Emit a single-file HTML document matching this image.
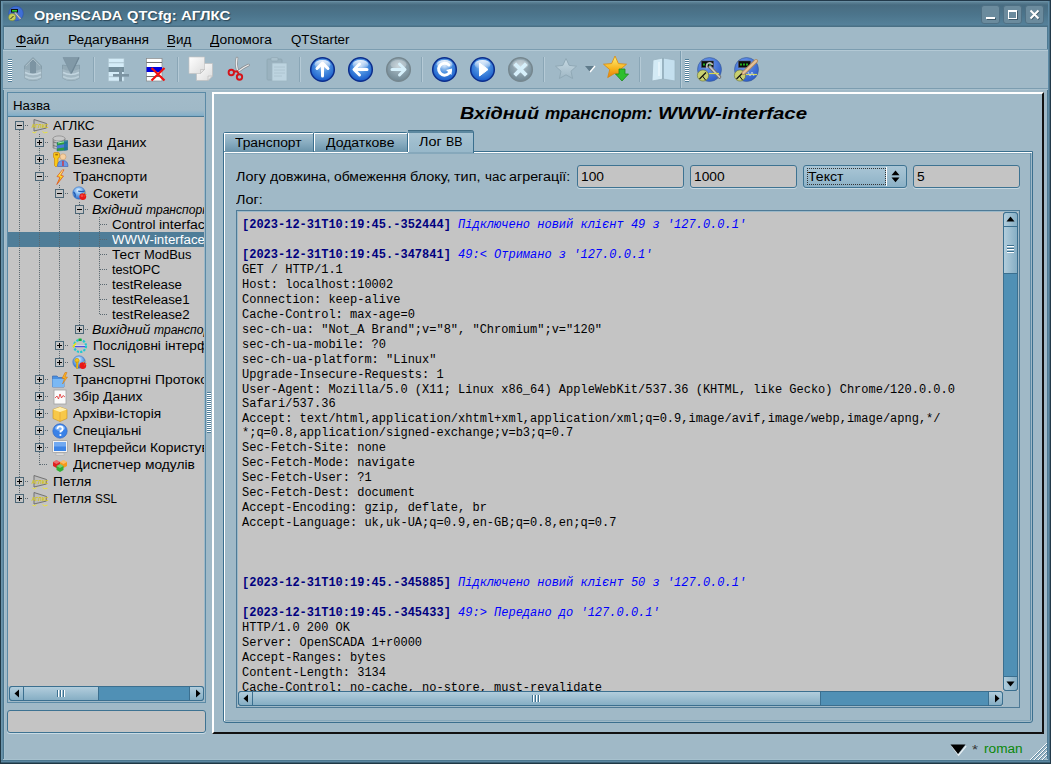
<!DOCTYPE html><html><head><meta charset="utf-8"><style>
html,body{margin:0;padding:0}
body{width:1051px;height:764px;overflow:hidden;position:relative;background:#a0b9c7;font-family:"Liberation Sans",sans-serif}
.a{position:absolute;box-sizing:border-box}
.t{position:absolute;white-space:pre;line-height:20px;transform-origin:0 0;font-family:"Liberation Sans",sans-serif}
.m{position:absolute;white-space:pre;line-height:20px;font-family:"Liberation Mono",monospace;font-size:12px;color:#000}
.m b{color:#00007f}
.m i{color:#0000ff}
svg{position:absolute;overflow:visible}
</style></head><body>

<div class="a" style="left:0px;top:0px;width:1051px;height:764px;background:#203844"></div>
<div class="a" style="left:3px;top:27px;width:1045px;height:733px;background:#a0b9c7"></div>
<div class="a" style="left:0px;top:0px;width:1051px;height:27px;background:linear-gradient(#22394a 0px,#22394a 1px,#7399ae 1px,#5e8397 2px,#486c81 5px,#4c758c 15px,#55819a 25px,#4a7085 26px,#4a7085 27px)"></div>
<div class="a" style="left:0px;top:0px;width:1px;height:764px;background:#203844"></div>
<div class="a" style="left:1px;top:1px;width:2px;height:762px;background:linear-gradient(90deg,#6f98ae,#5d88a1)"></div>
<div class="a" style="left:3px;top:27px;width:1px;height:733px;background:#4c778f"></div>
<div class="a" style="left:4px;top:27px;width:1px;height:733px;background:#a7c1ce"></div>
<div class="a" style="left:1047px;top:27px;width:1px;height:733px;background:#4e7a92"></div>
<div class="a" style="left:1048px;top:1px;width:1px;height:762px;background:#5d8aa5"></div>
<div class="a" style="left:1049px;top:1px;width:1px;height:762px;background:#4a6f84"></div>
<div class="a" style="left:1050px;top:0px;width:1px;height:764px;background:#22394a"></div>
<div class="a" style="left:3px;top:759px;width:1045px;height:1px;background:#a7c1ce"></div>
<div class="a" style="left:1px;top:760px;width:1049px;height:1px;background:#4c778f"></div>
<div class="a" style="left:1px;top:761px;width:1049px;height:1px;background:#5a86a0"></div>
<div class="a" style="left:1px;top:762px;width:1049px;height:1px;background:#3c6074"></div>
<div class="a" style="left:0px;top:763px;width:1051px;height:1px;background:#203844"></div>
<svg style="left:8px;top:6px" width="16" height="16" viewBox="0 0 16 16">
<circle cx="8" cy="7.5" r="7.3" fill="#3f6fd6"/><circle cx="8" cy="7.5" r="7.3" fill="none" stroke="#2a4fa8" stroke-width="0.6"/>
<rect x="3" y="3" width="7" height="3.5" fill="#111"/><rect x="4" y="4" width="5" height="1.6" fill="#2bd02b"/>
<circle cx="4.2" cy="11.2" r="3.6" fill="#c8cf5a" stroke="#6f7a2a" stroke-width="0.5"/><path d="M2.5 13 L5.5 10" stroke="#222" stroke-width="1"/>
<path d="M7 6.5 L12.5 13" stroke="#8c8c8c" stroke-width="2.2"/><path d="M7 6.5 L12.5 13" stroke="#d0d0d0" stroke-width="1"/>
</svg>
<div class="t " style="left:34.00px;top:6px;font-size:13px;font-weight:bold;font-style:normal;color:#fff;transform:scaleX(1.1107);text-shadow:1px 1px 1px #2b4656">OpenSCADA</div>
<div class="t " style="left:126.78px;top:6px;font-size:13px;font-weight:bold;font-style:normal;color:#fff;transform:scaleX(1.1274);text-shadow:1px 1px 1px #2b4656">QTCfg:</div>
<div class="t " style="left:181.00px;top:6px;font-size:13px;font-weight:bold;font-style:normal;color:#fff;transform:scaleX(1.1544);text-shadow:1px 1px 1px #2b4656">АГЛКС</div>
<div class="a" style="left:981px;top:5px;width:19px;height:19px;background:#6b8b9d;border:1px solid #4f7084;border-radius:3px"></div>
<div class="a" style="left:1003px;top:5px;width:19px;height:19px;background:#6b8b9d;border:1px solid #4f7084;border-radius:3px"></div>
<div class="a" style="left:1025px;top:5px;width:19px;height:19px;background:#6b8b9d;border:1px solid #4f7084;border-radius:3px"></div>
<div class="a" style="left:986px;top:17px;width:9px;height:2px;background:#fff;box-shadow:1px 1px 0 #3e5a6a"></div>
<div class="a" style="left:1008px;top:10px;width:9px;height:9px;border:1px solid #fff;border-top-width:2px;box-shadow:1px 1px 0 #3e5a6a"></div>
<svg style="left:1029px;top:9px" width="11" height="11" viewBox="0 0 11 11"><path d="M1.5 1.5 L9.5 9.5 M9.5 1.5 L1.5 9.5" stroke="#3e5a6a" stroke-width="2" transform="translate(0.7,0.7)"/><path d="M1.5 1.5 L9.5 9.5 M9.5 1.5 L1.5 9.5" stroke="#fff" stroke-width="2"/></svg>
<div class="a" style="left:3px;top:49px;width:1045px;height:1px;background:#7c9db0"></div>
<div class="a" style="left:3px;top:50px;width:1045px;height:1px;background:#b3c9d5"></div>
<div class="t " style="left:16.00px;top:30px;font-size:12px;font-weight:normal;font-style:normal;color:#000;transform:scaleX(1.1239);">Файл</div>
<div class="a" style="left:16px;top:46px;width:10px;height:1px;background:#000"></div>
<div class="t " style="left:68.00px;top:30px;font-size:12px;font-weight:normal;font-style:normal;color:#000;transform:scaleX(1.1483);">Редагування</div>
<div class="t " style="left:167.00px;top:30px;font-size:12px;font-weight:normal;font-style:normal;color:#000;transform:scaleX(1.1210);">Вид</div>
<div class="a" style="left:167px;top:46px;width:8px;height:1px;background:#000"></div>
<div class="t " style="left:210.00px;top:30px;font-size:12px;font-weight:normal;font-style:normal;color:#000;transform:scaleX(1.1516);">Допомога</div>
<div class="a" style="left:210px;top:46px;width:9px;height:1px;background:#000"></div>
<div class="t " style="left:291.00px;top:30px;font-size:12px;font-weight:normal;font-style:normal;color:#000;transform:scaleX(1.1098);">QTStarter</div>
<div class="a" style="left:3px;top:51px;width:1045px;height:37px;background:#a0b9c7"></div>
<div class="a" style="left:3px;top:88px;width:1045px;height:1px;background:#7c9db0"></div>
<div class="a" style="left:3px;top:89px;width:1045px;height:1px;background:#a9c1ce"></div>
<div class="a" style="left:8px;top:59px;width:4px;height:23px;background:repeating-linear-gradient(#4f7d98 0px,#4f7d98 1px,#ffffff 1px,#ffffff 2px)"></div>
<div class="a" style="left:685px;top:59px;width:4px;height:23px;background:repeating-linear-gradient(#4f7d98 0px,#4f7d98 1px,#ffffff 1px,#ffffff 2px)"></div>
<div class="a" style="left:93px;top:57px;width:1px;height:25px;background:#8aa6b6"></div>
<div class="a" style="left:94px;top:57px;width:1px;height:25px;background:#b5cad6"></div>
<div class="a" style="left:177px;top:57px;width:1px;height:25px;background:#8aa6b6"></div>
<div class="a" style="left:178px;top:57px;width:1px;height:25px;background:#b5cad6"></div>
<div class="a" style="left:299px;top:57px;width:1px;height:25px;background:#8aa6b6"></div>
<div class="a" style="left:300px;top:57px;width:1px;height:25px;background:#b5cad6"></div>
<div class="a" style="left:421px;top:57px;width:1px;height:25px;background:#8aa6b6"></div>
<div class="a" style="left:422px;top:57px;width:1px;height:25px;background:#b5cad6"></div>
<div class="a" style="left:543px;top:57px;width:1px;height:25px;background:#8aa6b6"></div>
<div class="a" style="left:544px;top:57px;width:1px;height:25px;background:#b5cad6"></div>
<div class="a" style="left:639px;top:57px;width:1px;height:25px;background:#8aa6b6"></div>
<div class="a" style="left:640px;top:57px;width:1px;height:25px;background:#b5cad6"></div>
<div class="a" style="left:680px;top:51px;width:1px;height:37px;background:#7c9db0"></div>
<div class="a" style="left:681px;top:51px;width:1px;height:37px;background:#b5cad6"></div>
<svg width="0" height="0" style="position:absolute"><defs>
<radialGradient id="gb" cx="50%" cy="35%" r="65%"><stop offset="0" stop-color="#bcd8f6"/><stop offset="0.45" stop-color="#4a8fe0"/><stop offset="1" stop-color="#1558c8"/></radialGradient>
<linearGradient id="gbh" x1="0" y1="0" x2="0" y2="1"><stop offset="0" stop-color="#ffffff" stop-opacity="0.9"/><stop offset="1" stop-color="#ffffff" stop-opacity="0"/></linearGradient>
<radialGradient id="gg" cx="50%" cy="35%" r="65%"><stop offset="0" stop-color="#b8c8d0"/><stop offset="0.5" stop-color="#8ea3ae"/><stop offset="1" stop-color="#6f8793"/></radialGradient>
<linearGradient id="gdb" x1="0" y1="0" x2="1" y2="0"><stop offset="0" stop-color="#8aa0ac"/><stop offset="0.5" stop-color="#b9c9d1"/><stop offset="1" stop-color="#7d95a2"/></linearGradient>
<linearGradient id="gstar" x1="0" y1="0" x2="0" y2="1"><stop offset="0" stop-color="#fff27a"/><stop offset="0.6" stop-color="#f7b21c"/><stop offset="1" stop-color="#e87a0c"/></linearGradient>
<linearGradient id="gsb" x1="0" y1="0" x2="0" y2="1"><stop offset="0" stop-color="#a9c3d1"/><stop offset="1" stop-color="#7fa3b8"/></linearGradient>
</defs></svg>
<svg style="left:309px;top:56px" width="27" height="27" viewBox="0 0 27 27"><g transform="translate(0.5,0.5)"><circle cx="13" cy="13" r="11.8" fill="url(#gb)" stroke="#0c2e8c" stroke-width="1.5"/>
<ellipse cx="13" cy="8" rx="8" ry="4.6" fill="url(#gbh)"/><path d="M13 19.5 V7 M7.5 12 L13 6.5 L18.5 12" stroke="#fff" stroke-width="3" fill="none" stroke-linecap="round" stroke-linejoin="round"/></g></svg>
<svg style="left:347px;top:56px" width="27" height="27" viewBox="0 0 27 27"><g transform="translate(0.5,0.5)"><circle cx="13" cy="13" r="11.8" fill="url(#gb)" stroke="#0c2e8c" stroke-width="1.5"/>
<ellipse cx="13" cy="8" rx="8" ry="4.6" fill="url(#gbh)"/><path d="M19.5 13 H7 M12 7.5 L6.5 13 L12 18.5" stroke="#fff" stroke-width="3" fill="none" stroke-linecap="round" stroke-linejoin="round"/></g></svg>
<svg style="left:385px;top:56px" width="27" height="27" viewBox="0 0 27 27"><g transform="translate(0.5,0.5)"><circle cx="13" cy="13" r="11.8" fill="url(#gg)" stroke="#76878f" stroke-width="1.5"/>
<ellipse cx="13" cy="8" rx="8" ry="4.6" fill="#ffffff" fill-opacity="0.25"/><path d="M6.5 13 H19 M14 7.5 L19.5 13 L14 18.5" stroke="#d6f0fb" stroke-width="3" fill="none" stroke-linecap="round" stroke-linejoin="round"/></g></svg>
<svg style="left:431px;top:56px" width="27" height="27" viewBox="0 0 27 27"><g transform="translate(0.5,0.5)"><circle cx="13" cy="13" r="11.8" fill="url(#gb)" stroke="#0c2e8c" stroke-width="1.5"/>
<ellipse cx="13" cy="8" rx="8" ry="4.6" fill="url(#gbh)"/><path d="M17.5 8.5 A6 6 0 1 0 19 14" stroke="#fff" stroke-width="3" fill="none" stroke-linecap="round" stroke-linejoin="round"/><path d="M14.5 13.5 L20.5 12 L20 18.5 Z" fill="#fff"/></g></svg>
<svg style="left:469px;top:56px" width="27" height="27" viewBox="0 0 27 27"><g transform="translate(0.5,0.5)"><circle cx="13" cy="13" r="11.8" fill="url(#gb)" stroke="#0c2e8c" stroke-width="1.5"/>
<ellipse cx="13" cy="8" rx="8" ry="4.6" fill="url(#gbh)"/><path d="M10 6.5 L18.5 13 L10 19.5 Z" fill="#fff" stroke="#fff" stroke-width="1" stroke-linejoin="round"/></g></svg>
<svg style="left:507px;top:56px" width="27" height="27" viewBox="0 0 27 27"><g transform="translate(0.5,0.5)"><circle cx="13" cy="13" r="11.8" fill="url(#gg)" stroke="#76878f" stroke-width="1.5"/>
<ellipse cx="13" cy="8" rx="8" ry="4.6" fill="#ffffff" fill-opacity="0.25"/><path d="M7.2 7.2 L18.8 18.8 M18.8 7.2 L7.2 18.8" stroke="#d6f0fb" stroke-width="4"/></g></svg>
<svg style="left:24px;top:57px" width="18" height="25" viewBox="0 0 18 25"><path d="M0.5 9 L9 0.5 L17.5 9 V21 Q9 26 0.5 21 Z" fill="#93aab6" stroke="#8299a6" stroke-width="0.8"/>
<path d="M0.5 12 Q9 16 17.5 12 V21 Q9 26 0.5 21 Z" fill="#a3b8c3"/>
<path d="M6 5 L9 2 L12 5 V16 Q9 17 6 16 Z" fill="#7c94a2"/>
<path d="M1 15.5 Q9 19.5 17 15.5" stroke="#c3d6e0" stroke-width="1.6" fill="none"/>
<path d="M1 19.5 Q9 23.5 17 19.5" stroke="#bcd0da" stroke-width="1.4" fill="none"/>
<path d="M2 9 L9 2 L16 9" stroke="#a9bcc6" stroke-width="1" fill="none"/></svg>
<svg style="left:62px;top:57px" width="18" height="25" viewBox="0 0 18 25"><path d="M0.5 8 Q9 11 17.5 8 V21 Q9 26 0.5 21 Z" fill="#93aab6" stroke="#8299a6" stroke-width="0.8"/>
<path d="M0.5 12 Q9 16 17.5 12 V21 Q9 26 0.5 21 Z" fill="#a3b8c3"/>
<path d="M1 0.5 H17 L9 17 Z" fill="#8199a7" stroke="#7890a0" stroke-width="0.6"/>
<path d="M17 0.5 L9 17" stroke="#6f8796" stroke-width="1.2"/>
<path d="M1 15.5 Q9 19.5 17 15.5" stroke="#c3d6e0" stroke-width="1.6" fill="none"/>
<path d="M1 19.5 Q9 23.5 17 19.5" stroke="#bcd0da" stroke-width="1.4" fill="none"/></svg>
<svg style="left:107px;top:57px" width="24" height="25" viewBox="0 0 24 25"><rect x="1.5" y="1.5" width="15.5" height="22.5" fill="#d4ecf8" stroke="#b0c6d2" stroke-width="0.6"/>
<rect x="1.5" y="5.3" width="15.5" height="0.9" fill="#a8c0cc"/><rect x="1.5" y="10" width="15.5" height="5" fill="#75909e"/>
<rect x="1.5" y="19.3" width="15.5" height="0.9" fill="#a8c0cc"/>
<rect x="6" y="17" width="16" height="2.6" fill="#7c94a2"/><rect x="12" y="11" width="3" height="13.5" fill="#7c94a2"/></svg>
<svg style="left:145px;top:57px" width="24" height="25" viewBox="0 0 24 25"><rect x="1.5" y="1.5" width="15.5" height="22.5" fill="#fff" stroke="#8a8a8a" stroke-width="0.7"/>
<rect x="1.5" y="5" width="15.5" height="0.9" fill="#606060"/><rect x="1.5" y="10" width="15.5" height="5" fill="#0000e0"/>
<rect x="1.5" y="19" width="15.5" height="0.9" fill="#606060"/>
<path d="M6.5 11 L19.5 23.5 M19.5 11 L6.5 23.5" stroke="#f01010" stroke-width="2.2"/></svg>
<svg style="left:188px;top:56px" width="26" height="26" viewBox="0 0 26 26"><defs><linearGradient id="gpg" x1="0" y1="0" x2="1" y2="1"><stop offset="0" stop-color="#ffffff"/><stop offset="1" stop-color="#dcdcdc"/></linearGradient></defs>
<path d="M8.5 7.5 H24.5 V20 L20 24.5 H8.5 Z" fill="url(#gpg)" stroke="#c0c0c0" stroke-width="0.7"/>
<path d="M24.5 20 L20 20 L20 24.5 Z" fill="#e8e8e8" stroke="#b8b8b8" stroke-width="0.6"/>
<path d="M1 1 H16.5 V13.5 L12.5 17.5 H1 Z" fill="url(#gpg)" stroke="#c4c4c4" stroke-width="0.7"/>
<path d="M16.5 13.5 L12.5 13.5 L12.5 17.5 Z" fill="#e6e6e6" stroke="#b8b8b8" stroke-width="0.6"/></svg>
<svg style="left:226px;top:56px" width="26" height="26" viewBox="0 0 26 26"><path d="M11 2 Q9.5 8 11.5 14.5" stroke="#8a8e92" stroke-width="2.6" fill="none" stroke-linecap="round"/>
<path d="M11 2 Q9.5 8 11.5 14.5" stroke="#eeeeee" stroke-width="1.2" fill="none" stroke-linecap="round"/>
<path d="M22.5 9 Q17 11.5 12 15.5" stroke="#8a8e92" stroke-width="2.6" fill="none" stroke-linecap="round"/>
<path d="M22.5 9 Q17 11.5 12 15.5" stroke="#eeeeee" stroke-width="1.2" fill="none" stroke-linecap="round"/>
<circle cx="5.3" cy="16.5" r="2.7" fill="none" stroke="#d4141a" stroke-width="1.9"/>
<circle cx="13.5" cy="21" r="2.7" fill="none" stroke="#d4141a" stroke-width="1.9"/>
<path d="M7.8 15.5 L11.5 15.5 L12.8 18.5" stroke="#d4141a" stroke-width="1.8" fill="none"/></svg>
<svg style="left:266px;top:57px" width="22" height="25" viewBox="0 0 22 25"><rect x="1" y="2" width="15" height="21" rx="1" fill="#9ab2bf" stroke="#8ea6b3" stroke-width="0.8"/>
<rect x="5" y="0.5" width="7" height="3.5" rx="1" fill="#a9c0cc" stroke="#8ea6b3" stroke-width="0.6"/>
<rect x="6" y="6" width="15" height="18" fill="#bdd4e0" stroke="#9fb6c2" stroke-width="0.8"/>
<path d="M8 10 H19 M8 13 H19 M8 16 H19 M8 19 H16" stroke="#abc2ce" stroke-width="0.8"/></svg>
<svg style="left:554px;top:57px" width="24" height="23" viewBox="0 0 24 23"><defs><linearGradient id="gsg" x1="0" y1="0" x2="0" y2="1"><stop offset="0" stop-color="#c6d9e3"/><stop offset="1" stop-color="#9fb7c4"/></linearGradient></defs><path d="M12 1.5 L15.2 8.4 L22.5 9.2 L17 14.2 L18.6 21.5 L12 17.8 L5.4 21.5 L7 14.2 L1.5 9.2 L8.8 8.4 Z" fill="url(#gsg)" stroke="#90a9b6" stroke-width="1" stroke-linejoin="round"/></svg>
<svg style="left:584px;top:65px" width="12" height="8" viewBox="0 0 12 8"><path d="M1 1 H11 L6 7 Z" fill="#5f7b8b"/><path d="M6 7 L11 1" stroke="#fff" stroke-width="1.4"/></svg>
<svg style="left:603px;top:55px" width="28" height="28" viewBox="0 0 28 28"><path d="M12 1 L15.4 8.6 L23.5 9.2 L17.3 14.6 L19.3 22.6 L12 18.2 L4.7 22.6 L6.7 14.6 L0.5 9.2 L8.6 8.6 Z" fill="url(#gstar)" stroke="#d9880a" stroke-width="0.8"/>
<path d="M16 14 H22 V19 H25.5 L19 26 L12.5 19 H16 Z" fill="#2fbf2f" stroke="#1d8a1d" stroke-width="0.8"/></svg>
<svg style="left:650px;top:56px" width="28" height="27" viewBox="0 0 28 27"><path d="M3 4 L13 2 L13 23 L2 25 Z" fill="#d3eaf5" stroke="#9ab4c2" stroke-width="0.8"/>
<path d="M13 2 L25 4 L25 25 L13 23 Z" fill="#c4dfee" stroke="#9ab4c2" stroke-width="0.8"/>
<path d="M13 2 V23" stroke="#8aa4b2" stroke-width="1.2"/><path d="M9 6 V20" stroke="#eaf6fb" stroke-width="1.5"/></svg>
<svg style="left:697px;top:56px" width="26" height="26" viewBox="0 0 26 26"><defs><radialGradient id="gos" cx="40%" cy="30%" r="70%"><stop offset="0" stop-color="#6f9cf0"/><stop offset="1" stop-color="#2f5fc8"/></radialGradient></defs>
<circle cx="12.5" cy="13.5" r="12" fill="url(#gos)" stroke="#3a5a90" stroke-width="0.6"/>
<rect x="4.5" y="5" width="12" height="6.5" fill="#0c0c0c" stroke="#505050" stroke-width="0.5"/><path d="M6 8.5 H15" stroke="#1fa81f" stroke-width="2" stroke-dasharray="2 1"/>
<circle cx="6" cy="19.5" r="5.6" fill="#c8d070" stroke="#6a7030" stroke-width="0.6"/><path d="M2.5 23 L9 16.5" stroke="#111" stroke-width="1.3"/><path d="M5.5 20 L8.5 24" stroke="#111" stroke-width="1"/><path d="M13 11 L22.5 21" stroke="#707070" stroke-width="3.6" stroke-linecap="round"/><path d="M13 11 L22.5 21" stroke="#c8c8c8" stroke-width="1.8" stroke-linecap="round"/>
<path d="M10.5 12 A3 3 0 1 1 15.5 9" stroke="#b8b8b8" stroke-width="1.8" fill="none"/>
<path d="M12 17.5 H22" stroke="#d8d850" stroke-width="1.2"/></svg>
<svg style="left:734px;top:56px" width="26" height="26" viewBox="0 0 26 26"><defs><radialGradient id="gos" cx="40%" cy="30%" r="70%"><stop offset="0" stop-color="#6f9cf0"/><stop offset="1" stop-color="#2f5fc8"/></radialGradient></defs>
<circle cx="12.5" cy="13.5" r="12" fill="url(#gos)" stroke="#3a5a90" stroke-width="0.6"/>
<rect x="4.5" y="5" width="12" height="6.5" fill="#0c0c0c" stroke="#505050" stroke-width="0.5"/><path d="M6 8.5 H15" stroke="#1fa81f" stroke-width="2" stroke-dasharray="2 1"/>
<circle cx="6" cy="19.5" r="5.6" fill="#c8d070" stroke="#6a7030" stroke-width="0.6"/><path d="M2.5 23 L9 16.5" stroke="#111" stroke-width="1.3"/><path d="M5.5 20 L8.5 24" stroke="#111" stroke-width="1"/><path d="M9.5 17 L22 5" stroke="#b08a60" stroke-width="4" stroke-linecap="round"/><path d="M9.5 17 L22 5" stroke="#e4c29a" stroke-width="2.2" stroke-linecap="round"/>
<path d="M12 18.5 H23" stroke="#d8d850" stroke-width="1.2"/><path d="M14 16 L16 20 L18 16 L20 20" stroke="#c8d8e8" stroke-width="0.8" fill="none"/></svg>
<div class="a" style="left:7px;top:92px;width:199px;height:611px;border:1px solid #5b8aa6;background:#a0b9c7"></div>
<div class="a" style="left:8px;top:93px;width:197px;height:23px;background:linear-gradient(#a3bbc9 0px,#a0b9c7 17px,#86b0c9 22px,#7aa9c6 23px)"></div>
<div class="a" style="left:8px;top:116px;width:197px;height:1px;background:#4b7a95"></div>
<div class="t " style="left:13.00px;top:96px;font-size:12px;font-weight:normal;font-style:normal;color:#000;transform:scaleX(1.1069);">Назва</div>
<div class="a" style="left:8px;top:117px;width:196px;height:569px;background:#c4c4c4"></div>
<div class="a" style="left:8px;top:232px;width:196px;height:15px;background:#4f7d98"></div>
<div class="a" style="left:19px;top:130px;width:1px;height:364px;background:repeating-linear-gradient(#5a6870 0px,#5a6870 1px,transparent 1px,transparent 2px)"></div>
<div class="a" style="left:39px;top:134px;width:1px;height:331px;background:repeating-linear-gradient(#5a6870 0px,#5a6870 1px,transparent 1px,transparent 2px)"></div>
<div class="a" style="left:59px;top:185px;width:1px;height:173px;background:repeating-linear-gradient(#5a6870 0px,#5a6870 1px,transparent 1px,transparent 2px)"></div>
<div class="a" style="left:79px;top:202px;width:1px;height:123px;background:repeating-linear-gradient(#5a6870 0px,#5a6870 1px,transparent 1px,transparent 2px)"></div>
<div class="a" style="left:99px;top:217px;width:1px;height:98px;background:repeating-linear-gradient(#5a6870 0px,#5a6870 1px,transparent 1px,transparent 2px)"></div>
<div class="a" style="left:15px;top:121px;width:9px;height:9px;border:1px solid #4c6676;background:#c4c4c4"></div>
<div class="a" style="left:17px;top:125px;width:5px;height:1px;background:#000"></div>
<div class="a" style="left:25px;top:125px;width:4px;height:1px;background:repeating-linear-gradient(90deg,#5a6870 0px,#5a6870 1px,transparent 1px,transparent 2px)"></div>
<svg style="left:32px;top:118px" width="16" height="16" viewBox="0 0 16 16"><path d="M2 1.5 L14.5 5.5 L14.5 10 L2 13 Z" fill="#bcbcbc" stroke="#6a6a6a" stroke-width="0.9"/>
<text x="8.2" y="9.6" font-size="5.2" font-weight="bold" fill="#d8c818" text-anchor="middle" font-family="Liberation Sans">АГЛКС</text>
<path d="M0.5 14.2 Q3 15.8 4.5 13.6 M10.5 13.6 Q12 15.8 15.5 14.2" stroke="#e8e040" stroke-width="1" fill="none"/></svg>
<div class="t " style="left:53.00px;top:116px;font-size:12px;font-weight:normal;font-style:normal;color:#000;transform:scaleX(1.1134);">АГЛКС</div>
<div class="a" style="left:35px;top:138px;width:9px;height:9px;border:1px solid #4c6676;background:#c4c4c4"></div>
<div class="a" style="left:37px;top:142px;width:5px;height:1px;background:#000"></div>
<div class="a" style="left:39px;top:140px;width:1px;height:5px;background:#000"></div>
<div class="a" style="left:45px;top:142px;width:4px;height:1px;background:repeating-linear-gradient(90deg,#5a6870 0px,#5a6870 1px,transparent 1px,transparent 2px)"></div>
<svg style="left:52px;top:135px" width="16" height="16" viewBox="0 0 16 16"><defs><linearGradient id="gdbm" x1="0" y1="0" x2="1" y2="0"><stop offset="0" stop-color="#9a9a9a"/><stop offset="0.4" stop-color="#e8e8e8"/><stop offset="1" stop-color="#8a8a8a"/></linearGradient></defs>
<path d="M1 3.5 V13 Q7 16 13 13 V3.5" fill="url(#gdbm)" stroke="#7a7a7a" stroke-width="0.6"/>
<ellipse cx="7" cy="3.5" rx="6" ry="2.6" fill="#c8c8c8" stroke="#7a7a7a" stroke-width="0.6"/>
<path d="M1 7 Q7 10 13 7 M1 10.5 Q7 13.5 13 10.5" stroke="#6a6a6a" stroke-width="0.8" fill="none"/>
<path d="M5 7.5 L15.5 5.5 L15.5 15 L5 16 Z" fill="#2c9c3c" stroke="#1a6a8a" stroke-width="0.5"/>
<path d="M5 10.5 L15.5 8.5 L15.5 12 L5 13.5 Z" fill="#4a7ad8"/><path d="M6 8 L15 6.2" stroke="#a8f0a8" stroke-width="1"/><path d="M12 6 L15.5 5.5 L15.5 15 L12 15.4 Z" fill="#1e6aa8" opacity="0.8"/></svg>
<div class="t " style="left:73.00px;top:133px;font-size:12px;font-weight:normal;font-style:normal;color:#000;transform:scaleX(1.1186);">Бази</div>
<div class="t " style="left:106.58px;top:133px;font-size:12px;font-weight:normal;font-style:normal;color:#000;transform:scaleX(1.1571);">Даних</div>
<div class="a" style="left:35px;top:155px;width:9px;height:9px;border:1px solid #4c6676;background:#c4c4c4"></div>
<div class="a" style="left:37px;top:159px;width:5px;height:1px;background:#000"></div>
<div class="a" style="left:39px;top:157px;width:1px;height:5px;background:#000"></div>
<div class="a" style="left:45px;top:159px;width:4px;height:1px;background:repeating-linear-gradient(90deg,#5a6870 0px,#5a6870 1px,transparent 1px,transparent 2px)"></div>
<svg style="left:52px;top:152px" width="16" height="16" viewBox="0 0 16 16"><path d="M1.5 1.5 Q1.5 0.5 3 0.5 H6 Q7.5 0.5 7.5 2 V5 Q7.5 6 6 6 V13 L4 15 L2.5 13.5 V6 Q1.5 6 1.5 5 Z" fill="#f8c818" stroke="#d08808" stroke-width="0.7"/>
<rect x="3.3" y="1.8" width="2.6" height="1.6" fill="#a86a08"/>
<circle cx="11" cy="4.8" r="3" fill="#f6d0a0" stroke="#c09060" stroke-width="0.5"/>
<path d="M5.5 14.5 Q5.5 8.5 11 8.5 Q16 8.5 16 14.5 Z" fill="#6a9ae8" stroke="#3a5ab0" stroke-width="0.6"/>
<path d="M11 9 V14" stroke="#e02020" stroke-width="1.2"/></svg>
<div class="t " style="left:73.00px;top:150px;font-size:12px;font-weight:normal;font-style:normal;color:#000;transform:scaleX(1.1485);">Безпека</div>
<div class="a" style="left:35px;top:172px;width:9px;height:9px;border:1px solid #4c6676;background:#c4c4c4"></div>
<div class="a" style="left:37px;top:176px;width:5px;height:1px;background:#000"></div>
<div class="a" style="left:45px;top:176px;width:4px;height:1px;background:repeating-linear-gradient(90deg,#5a6870 0px,#5a6870 1px,transparent 1px,transparent 2px)"></div>
<svg style="left:52px;top:169px" width="16" height="16" viewBox="0 0 16 16"><defs><linearGradient id="gbolt" x1="0" y1="0" x2="0" y2="1"><stop offset="0" stop-color="#fff8b0"/><stop offset="0.5" stop-color="#f8d820"/><stop offset="1" stop-color="#f08010"/></linearGradient></defs><path d="M10.5 0.8 L5 7.5 L8 8.3 L4.8 15.5 L11.5 7 L8.7 6.3 L12 0.8 Z" fill="url(#gbolt)" stroke="#e05818" stroke-width="0.8" stroke-linejoin="round"/></svg>
<div class="t " style="left:73.00px;top:167px;font-size:12px;font-weight:normal;font-style:normal;color:#000;transform:scaleX(1.1543);">Транспорти</div>
<div class="a" style="left:55px;top:189px;width:9px;height:9px;border:1px solid #4c6676;background:#c4c4c4"></div>
<div class="a" style="left:57px;top:193px;width:5px;height:1px;background:#000"></div>
<div class="a" style="left:65px;top:193px;width:4px;height:1px;background:repeating-linear-gradient(90deg,#5a6870 0px,#5a6870 1px,transparent 1px,transparent 2px)"></div>
<svg style="left:72px;top:186px" width="16" height="16" viewBox="0 0 16 16"><defs><radialGradient id="gglb" cx="45%" cy="30%" r="70%"><stop offset="0" stop-color="#f0f8ff"/><stop offset="0.35" stop-color="#8cc0f4"/><stop offset="1" stop-color="#2a6ac8"/></radialGradient></defs>
<circle cx="7" cy="7" r="6.2" fill="url(#gglb)" stroke="#3a70c0" stroke-width="0.6"/><path d="M1.5 6 Q4 8 3 11 M6 5 Q10 6 12.5 5" stroke="#1f5ab0" stroke-width="1.2" fill="none"/>
<circle cx="10.8" cy="10.6" r="3.4" fill="#e81818"/><circle cx="10" cy="9.8" r="1.4" fill="#ff6a6a" opacity="0.6"/><path d="M11 8 L13.5 5.5 M12.5 10 L15 8" stroke="#f8a818" stroke-width="1" stroke-dasharray="1 0.6"/></svg>
<div class="t " style="left:93.00px;top:184px;font-size:12px;font-weight:normal;font-style:normal;color:#000;transform:scaleX(1.1510);">Сокети</div>
<div class="a" style="left:75px;top:205px;width:9px;height:9px;border:1px solid #4c6676;background:#c4c4c4"></div>
<div class="a" style="left:77px;top:209px;width:5px;height:1px;background:#000"></div>
<div class="a" style="left:85px;top:209px;width:4px;height:1px;background:repeating-linear-gradient(90deg,#5a6870 0px,#5a6870 1px,transparent 1px,transparent 2px)"></div>
<div class="t " style="left:92.00px;top:200px;font-size:12px;font-weight:normal;font-style:italic;color:#000;transform:scaleX(1.1757);">Вхідний</div>
<div class="t " style="left:146.22px;top:200px;font-size:12px;font-weight:normal;font-style:italic;color:#000;transform:scaleX(1.0067);">транспорт</div>
<div class="a" style="left:100px;top:224px;width:8px;height:1px;background:repeating-linear-gradient(90deg,#5a6870 0px,#5a6870 1px,transparent 1px,transparent 2px)"></div>
<div class="t " style="left:112.00px;top:215px;font-size:12px;font-weight:normal;font-style:normal;color:#000;transform:scaleX(1.1212);">Control</div>
<div class="t " style="left:159.19px;top:215px;font-size:12px;font-weight:normal;font-style:normal;color:#000;transform:scaleX(1.1633);">interface</div>
<div class="a" style="left:100px;top:239px;width:8px;height:1px;background:repeating-linear-gradient(90deg,#5a6870 0px,#5a6870 1px,transparent 1px,transparent 2px)"></div>
<div class="t " style="left:112.00px;top:230px;font-size:12px;font-weight:normal;font-style:normal;color:#fff;transform:scaleX(1.1095);">WWW-interface</div>
<div class="a" style="left:100px;top:254px;width:8px;height:1px;background:repeating-linear-gradient(90deg,#5a6870 0px,#5a6870 1px,transparent 1px,transparent 2px)"></div>
<div class="t " style="left:112.00px;top:245px;font-size:12px;font-weight:normal;font-style:normal;color:#000;transform:scaleX(1.1397);">Тест</div>
<div class="t " style="left:144.11px;top:245px;font-size:12px;font-weight:normal;font-style:normal;color:#000;transform:scaleX(1.0774);">ModBus</div>
<div class="a" style="left:100px;top:269px;width:8px;height:1px;background:repeating-linear-gradient(90deg,#5a6870 0px,#5a6870 1px,transparent 1px,transparent 2px)"></div>
<div class="t " style="left:112.00px;top:260px;font-size:12px;font-weight:normal;font-style:normal;color:#000;transform:scaleX(1.0614);">testOPC</div>
<div class="a" style="left:100px;top:284px;width:8px;height:1px;background:repeating-linear-gradient(90deg,#5a6870 0px,#5a6870 1px,transparent 1px,transparent 2px)"></div>
<div class="t " style="left:112.00px;top:275px;font-size:12px;font-weight:normal;font-style:normal;color:#000;transform:scaleX(1.1043);">testRelease</div>
<div class="a" style="left:100px;top:299px;width:8px;height:1px;background:repeating-linear-gradient(90deg,#5a6870 0px,#5a6870 1px,transparent 1px,transparent 2px)"></div>
<div class="t " style="left:112.00px;top:290px;font-size:12px;font-weight:normal;font-style:normal;color:#000;transform:scaleX(1.1082);">testRelease1</div>
<div class="a" style="left:100px;top:314px;width:8px;height:1px;background:repeating-linear-gradient(90deg,#5a6870 0px,#5a6870 1px,transparent 1px,transparent 2px)"></div>
<div class="t " style="left:112.00px;top:305px;font-size:12px;font-weight:normal;font-style:normal;color:#000;transform:scaleX(1.1082);">testRelease2</div>
<div class="a" style="left:75px;top:325px;width:9px;height:9px;border:1px solid #4c6676;background:#c4c4c4"></div>
<div class="a" style="left:77px;top:329px;width:5px;height:1px;background:#000"></div>
<div class="a" style="left:79px;top:327px;width:1px;height:5px;background:#000"></div>
<div class="a" style="left:85px;top:329px;width:4px;height:1px;background:repeating-linear-gradient(90deg,#5a6870 0px,#5a6870 1px,transparent 1px,transparent 2px)"></div>
<div class="t " style="left:92.00px;top:320px;font-size:12px;font-weight:normal;font-style:italic;color:#000;transform:scaleX(1.1655);">Вихідний</div>
<div class="t " style="left:154.02px;top:320px;font-size:12px;font-weight:normal;font-style:italic;color:#000;transform:scaleX(1.0067);">транспорт</div>
<div class="a" style="left:55px;top:341px;width:9px;height:9px;border:1px solid #4c6676;background:#c4c4c4"></div>
<div class="a" style="left:57px;top:345px;width:5px;height:1px;background:#000"></div>
<div class="a" style="left:59px;top:343px;width:1px;height:5px;background:#000"></div>
<div class="a" style="left:65px;top:345px;width:4px;height:1px;background:repeating-linear-gradient(90deg,#5a6870 0px,#5a6870 1px,transparent 1px,transparent 2px)"></div>
<svg style="left:72px;top:338px" width="16" height="16" viewBox="0 0 16 16"><circle cx="8" cy="8" r="6" fill="none" stroke="#20c8d0" stroke-width="2.2" stroke-dasharray="2.2 1.2"/>
<rect x="6.5" y="0.5" width="3" height="2.5" fill="#18b030"/><path d="M1 9 Q4 6 3 5" stroke="#e8e020" stroke-width="2" fill="none"/>
<path d="M3 8.5 H13" stroke="#5050e0" stroke-width="1.4"/><path d="M3 7.5 H13" stroke="#e0e0f0" stroke-width="0.8"/></svg>
<div class="t " style="left:93.00px;top:336px;font-size:12px;font-weight:normal;font-style:normal;color:#000;transform:scaleX(1.1251);">Послідовні</div>
<div class="t " style="left:164.67px;top:336px;font-size:12px;font-weight:normal;font-style:normal;color:#000;transform:scaleX(1.1417);">інтерфейси</div>
<div class="a" style="left:55px;top:358px;width:9px;height:9px;border:1px solid #4c6676;background:#c4c4c4"></div>
<div class="a" style="left:57px;top:362px;width:5px;height:1px;background:#000"></div>
<div class="a" style="left:59px;top:360px;width:1px;height:5px;background:#000"></div>
<div class="a" style="left:65px;top:362px;width:4px;height:1px;background:repeating-linear-gradient(90deg,#5a6870 0px,#5a6870 1px,transparent 1px,transparent 2px)"></div>
<svg style="left:72px;top:355px" width="16" height="16" viewBox="0 0 16 16"><circle cx="7" cy="7" r="6.2" fill="url(#gglb)" stroke="#3a70c0" stroke-width="0.6"/>
<circle cx="5" cy="5.5" r="2.2" fill="#f5c518" stroke="#b08008" stroke-width="0.5"/><rect x="4.2" y="7" width="1.8" height="6.5" fill="#f5c518" stroke="#b08008" stroke-width="0.4"/>
<circle cx="10.8" cy="10.6" r="3.4" fill="#e81818"/><path d="M11 8 L13.5 5.5 M12.5 10 L15 8" stroke="#f8a818" stroke-width="1" stroke-dasharray="1 0.6"/></svg>
<div class="t " style="left:93.00px;top:353px;font-size:12px;font-weight:normal;font-style:normal;color:#000;transform:scaleX(0.9676);">SSL</div>
<div class="a" style="left:35px;top:375px;width:9px;height:9px;border:1px solid #4c6676;background:#c4c4c4"></div>
<div class="a" style="left:37px;top:379px;width:5px;height:1px;background:#000"></div>
<div class="a" style="left:39px;top:377px;width:1px;height:5px;background:#000"></div>
<div class="a" style="left:45px;top:379px;width:4px;height:1px;background:repeating-linear-gradient(90deg,#5a6870 0px,#5a6870 1px,transparent 1px,transparent 2px)"></div>
<svg style="left:52px;top:372px" width="16" height="16" viewBox="0 0 16 16"><path d="M0.5 4 H5 L6.5 5.5 H12 V15 H0.5 Z" fill="#4a90e0" stroke="#2a60b0" stroke-width="0.6"/><path d="M0.5 7 H13 L12 15 H0.5 Z" fill="#7ab8f4"/>
<path d="M13 0.5 L10 6.5 L12.5 6.5 L10.5 12 L15.5 5 L13 5 L15 0.5 Z" fill="#f8b020" stroke="#d07010" stroke-width="0.5"/></svg>
<div class="t " style="left:73.00px;top:370px;font-size:12px;font-weight:normal;font-style:normal;color:#000;transform:scaleX(1.1600);">Транспортні</div>
<div class="t " style="left:154.53px;top:370px;font-size:12px;font-weight:normal;font-style:normal;color:#000;transform:scaleX(1.1546);">Протоколи</div>
<div class="a" style="left:35px;top:392px;width:9px;height:9px;border:1px solid #4c6676;background:#c4c4c4"></div>
<div class="a" style="left:37px;top:396px;width:5px;height:1px;background:#000"></div>
<div class="a" style="left:39px;top:394px;width:1px;height:5px;background:#000"></div>
<div class="a" style="left:45px;top:396px;width:4px;height:1px;background:repeating-linear-gradient(90deg,#5a6870 0px,#5a6870 1px,transparent 1px,transparent 2px)"></div>
<svg style="left:52px;top:389px" width="16" height="16" viewBox="0 0 16 16"><rect x="2" y="1" width="12" height="14" fill="#fafafa" stroke="#a0a0a0" stroke-width="0.8"/><path d="M3 9 L5 7 L6.5 10 L8 5 L9.5 9 L11 6.5 L13 8" stroke="#e03030" stroke-width="0.8" fill="none"/></svg>
<div class="t " style="left:73.00px;top:387px;font-size:12px;font-weight:normal;font-style:normal;color:#000;transform:scaleX(1.1099);">Збір</div>
<div class="t " style="left:102.86px;top:387px;font-size:12px;font-weight:normal;font-style:normal;color:#000;transform:scaleX(1.1571);">Даних</div>
<div class="a" style="left:35px;top:409px;width:9px;height:9px;border:1px solid #4c6676;background:#c4c4c4"></div>
<div class="a" style="left:37px;top:413px;width:5px;height:1px;background:#000"></div>
<div class="a" style="left:39px;top:411px;width:1px;height:5px;background:#000"></div>
<div class="a" style="left:45px;top:413px;width:4px;height:1px;background:repeating-linear-gradient(90deg,#5a6870 0px,#5a6870 1px,transparent 1px,transparent 2px)"></div>
<svg style="left:52px;top:406px" width="16" height="16" viewBox="0 0 16 16"><path d="M8 1 L15 3.5 V12.5 L8 15.5 L1 12.5 V3.5 Z" fill="#f8c848" stroke="#c89020" stroke-width="0.6"/><path d="M1 3.5 L8 6 L15 3.5 L8 1 Z" fill="#fff0b0"/><path d="M8 6 V15.5" stroke="#e0a030" stroke-width="0.6"/></svg>
<div class="t " style="left:73.00px;top:404px;font-size:12px;font-weight:normal;font-style:normal;color:#000;transform:scaleX(1.1371);">Архіви-Історія</div>
<div class="a" style="left:35px;top:426px;width:9px;height:9px;border:1px solid #4c6676;background:#c4c4c4"></div>
<div class="a" style="left:37px;top:430px;width:5px;height:1px;background:#000"></div>
<div class="a" style="left:39px;top:428px;width:1px;height:5px;background:#000"></div>
<div class="a" style="left:45px;top:430px;width:4px;height:1px;background:repeating-linear-gradient(90deg,#5a6870 0px,#5a6870 1px,transparent 1px,transparent 2px)"></div>
<svg style="left:52px;top:423px" width="16" height="16" viewBox="0 0 16 16"><circle cx="8" cy="8" r="7.2" fill="#3a82e8" stroke="#2a60c0" stroke-width="0.6"/><ellipse cx="8" cy="5" rx="5" ry="3" fill="#a8d0ff" opacity="0.6"/>
<path d="M5.5 6 Q5.5 3.3 8 3.3 Q10.7 3.3 10.7 5.8 Q10.7 7.5 8.5 8.3 V9.5" stroke="#fff" stroke-width="1.8" fill="none"/><circle cx="8.4" cy="12" r="1.1" fill="#fff"/></svg>
<div class="t " style="left:73.00px;top:421px;font-size:12px;font-weight:normal;font-style:normal;color:#000;transform:scaleX(1.1284);">Спеціальні</div>
<div class="a" style="left:35px;top:443px;width:9px;height:9px;border:1px solid #4c6676;background:#c4c4c4"></div>
<div class="a" style="left:37px;top:447px;width:5px;height:1px;background:#000"></div>
<div class="a" style="left:39px;top:445px;width:1px;height:5px;background:#000"></div>
<div class="a" style="left:45px;top:447px;width:4px;height:1px;background:repeating-linear-gradient(90deg,#5a6870 0px,#5a6870 1px,transparent 1px,transparent 2px)"></div>
<svg style="left:52px;top:440px" width="16" height="16" viewBox="0 0 16 16"><rect x="0.5" y="0.5" width="15" height="12" rx="1" fill="#f2f2f2" stroke="#9a9a9a" stroke-width="0.7"/><rect x="2" y="2" width="12" height="9" fill="#3d84e6"/><rect x="2" y="2" width="12" height="4.5" fill="#9cc8fa" opacity="0.55"/>
<rect x="4" y="13" width="8" height="2.5" fill="#dadada" stroke="#a8a8a8" stroke-width="0.5"/></svg>
<div class="t " style="left:73.00px;top:438px;font-size:12px;font-weight:normal;font-style:normal;color:#000;transform:scaleX(1.1335);">Інтерфейси</div>
<div class="t " style="left:150.05px;top:438px;font-size:12px;font-weight:normal;font-style:normal;color:#000;transform:scaleX(1.1513);">Користувача</div>
<div class="a" style="left:40px;top:464px;width:8px;height:1px;background:repeating-linear-gradient(90deg,#5a6870 0px,#5a6870 1px,transparent 1px,transparent 2px)"></div>
<svg style="left:52px;top:457px" width="16" height="16" viewBox="0 0 16 16"><path d="M1 5 L4.5 3 L8 5 V9 L4.5 11 L1 9 Z" fill="#e02020"/><path d="M8 5 L11.5 3 L15 5 V9 L11.5 11 L8 9 Z" fill="#f89818"/><path d="M4.5 9 L8 7 L11.5 9 V13 L8 15 L4.5 13 Z" fill="#30b030"/>
<path d="M1 5 L4.5 3 L8 5 L4.5 7 Z M8 5 L11.5 3 L15 5 L11.5 7 Z M4.5 9 L8 7 L11.5 9 L8 11 Z" fill="#fff" opacity="0.35"/></svg>
<div class="t " style="left:73.00px;top:455px;font-size:12px;font-weight:normal;font-style:normal;color:#000;transform:scaleX(1.1600);">Диспетчер</div>
<div class="t " style="left:144.91px;top:455px;font-size:12px;font-weight:normal;font-style:normal;color:#000;transform:scaleX(1.1482);">модулів</div>
<div class="a" style="left:15px;top:477px;width:9px;height:9px;border:1px solid #4c6676;background:#c4c4c4"></div>
<div class="a" style="left:17px;top:481px;width:5px;height:1px;background:#000"></div>
<div class="a" style="left:19px;top:479px;width:1px;height:5px;background:#000"></div>
<div class="a" style="left:25px;top:481px;width:4px;height:1px;background:repeating-linear-gradient(90deg,#5a6870 0px,#5a6870 1px,transparent 1px,transparent 2px)"></div>
<svg style="left:32px;top:474px" width="16" height="16" viewBox="0 0 16 16"><path d="M2 1.5 L14.5 5.5 L14.5 10 L2 13 Z" fill="#bcbcbc" stroke="#6a6a6a" stroke-width="0.9"/>
<text x="8.2" y="9.6" font-size="5.2" font-weight="bold" fill="#d8c818" text-anchor="middle" font-family="Liberation Sans">АГЛКС</text>
<path d="M0.5 14.2 Q3 15.8 4.5 13.6 M10.5 13.6 Q12 15.8 15.5 14.2" stroke="#e8e040" stroke-width="1" fill="none"/></svg>
<div class="t " style="left:53.00px;top:472px;font-size:12px;font-weight:normal;font-style:normal;color:#000;transform:scaleX(1.1384);">Петля</div>
<div class="a" style="left:15px;top:494px;width:9px;height:9px;border:1px solid #4c6676;background:#c4c4c4"></div>
<div class="a" style="left:17px;top:498px;width:5px;height:1px;background:#000"></div>
<div class="a" style="left:19px;top:496px;width:1px;height:5px;background:#000"></div>
<div class="a" style="left:25px;top:498px;width:4px;height:1px;background:repeating-linear-gradient(90deg,#5a6870 0px,#5a6870 1px,transparent 1px,transparent 2px)"></div>
<svg style="left:32px;top:491px" width="16" height="16" viewBox="0 0 16 16"><path d="M2 1.5 L14.5 5.5 L14.5 10 L2 13 Z" fill="#bcbcbc" stroke="#6a6a6a" stroke-width="0.9"/>
<text x="8.2" y="9.6" font-size="5.2" font-weight="bold" fill="#d8c818" text-anchor="middle" font-family="Liberation Sans">АГЛКС</text>
<path d="M0.5 14.2 Q3 15.8 4.5 13.6 M10.5 13.6 Q12 15.8 15.5 14.2" stroke="#e8e040" stroke-width="1" fill="none"/></svg>
<div class="t " style="left:53.00px;top:489px;font-size:12px;font-weight:normal;font-style:normal;color:#000;transform:scaleX(1.1384);">Петля</div>
<div class="t " style="left:95.11px;top:489px;font-size:12px;font-weight:normal;font-style:normal;color:#000;transform:scaleX(0.9676);">SSL</div>
<div class="a" style="left:204px;top:93px;width:1px;height:594px;background:#a0b9c7"></div>
<div class="a" style="left:205px;top:92px;width:1px;height:611px;background:#5b8aa6"></div>
<div class="a" style="left:206px;top:92px;width:6px;height:611px;background:#a0b9c7"></div>
<div class="a" style="left:207px;top:392px;width:4px;height:41px;background:repeating-linear-gradient(#4f7d98 0px,#4f7d98 1px,#ffffff 1px,#ffffff 2px)"></div>
<div class="a" style="left:8px;top:686px;width:197px;height:16px;background:#a0b9c7"></div>
<div class="a" style="left:9px;top:686px;width:195px;height:15px;background:#5090b5;border:1px solid #3b6f8f;border-radius:3px"></div>
<div class="a" style="left:9px;top:686px;width:15px;height:15px;background:linear-gradient(#b2cddc,#86aec4);border:1px solid #3b6f8f;border-radius:3px 0 0 3px"></div>
<svg style="left:14px;top:689px" width="6" height="9" viewBox="0 0 6 9"><path d="M5 0.5 V8.5 L0.5 4.5 Z" fill="#000"/></svg>
<div class="a" style="left:23px;top:686px;width:76px;height:15px;background:linear-gradient(#b2cddc,#86aec4);border:1px solid #3b6f8f;border-left:1px solid #3b6f8f"></div>
<div class="a" style="left:57px;top:690px;width:1px;height:7px;background:#3b7090"></div>
<div class="a" style="left:58px;top:690px;width:1px;height:7px;background:#fff"></div>
<div class="a" style="left:60px;top:690px;width:1px;height:7px;background:#3b7090"></div>
<div class="a" style="left:61px;top:690px;width:1px;height:7px;background:#fff"></div>
<div class="a" style="left:63px;top:690px;width:1px;height:7px;background:#3b7090"></div>
<div class="a" style="left:64px;top:690px;width:1px;height:7px;background:#fff"></div>
<div class="a" style="left:189px;top:686px;width:15px;height:15px;background:linear-gradient(#b2cddc,#86aec4);border:1px solid #3b6f8f;border-radius:0 3px 3px 0"></div>
<svg style="left:195px;top:689px" width="6" height="9" viewBox="0 0 6 9"><path d="M1 0.5 V8.5 L5.5 4.5 Z" fill="#000"/></svg>
<div class="a" style="left:7px;top:710px;width:199px;height:23px;background:#c4c4c4;border:1px solid #3e7392;border-radius:3px;box-shadow:0 1px 0 #c9dbe4"></div>
<div class="a" style="left:212px;top:92px;width:832px;height:642px;border-style:solid;border-width:2px;border-color:#ffffff #111111 #111111 #ffffff;background:#a0b9c7"></div>
<div class="t " style="left:460.00px;top:104px;font-size:17px;font-weight:bold;font-style:italic;color:#000;transform:scaleX(1.1659);">Вхідний</div>
<div class="t " style="left:544.97px;top:104px;font-size:17px;font-weight:bold;font-style:italic;color:#000;transform:scaleX(1.0091);">транспорт:</div>
<div class="t " style="left:658.00px;top:104px;font-size:17px;font-weight:bold;font-style:italic;color:#000;transform:scaleX(1.2015);">WWW-interface</div>
<div class="a" style="left:223px;top:151px;width:810px;height:572px;border:1px solid #3a6f8e;border-radius:0 0 3px 3px;background:#a0b9c7"></div>
<div class="a" style="left:224px;top:152px;width:808px;height:1px;background:#fff"></div>
<div class="a" style="left:224px;top:152px;width:1px;height:569px;background:#fff"></div>
<div class="a" style="left:225px;top:153px;width:806px;height:1px;background:#86a8bb"></div>
<div class="a" style="left:1030px;top:153px;width:1px;height:567px;background:#5d8aa5"></div>
<div class="a" style="left:225px;top:720px;width:806px;height:1px;background:#86a8bb"></div>
<div class="a" style="left:223px;top:132px;width:91px;height:20px;border:1px solid #3a6f8e;border-bottom:none;border-radius:3px 3px 0 0;background:linear-gradient(#a9c1cf,#89adc1 50%,#6a93aa)"></div>
<div class="a" style="left:224px;top:133px;width:89px;height:1px;background:#fff"></div>
<div class="a" style="left:224px;top:133px;width:1px;height:18px;background:#fff"></div>
<div class="t " style="left:235.00px;top:133px;font-size:12px;font-weight:normal;font-style:normal;color:#000;transform:scaleX(1.1533);">Транспорт</div>
<div class="a" style="left:313px;top:132px;width:95px;height:20px;border:1px solid #3a6f8e;border-bottom:none;border-radius:3px 3px 0 0;background:linear-gradient(#a9c1cf,#89adc1 50%,#6a93aa)"></div>
<div class="a" style="left:314px;top:133px;width:93px;height:1px;background:#fff"></div>
<div class="a" style="left:314px;top:133px;width:1px;height:18px;background:#fff"></div>
<div class="t " style="left:326.00px;top:133px;font-size:12px;font-weight:normal;font-style:normal;color:#000;transform:scaleX(1.1687);">Додаткове</div>
<div class="a" style="left:408px;top:130px;width:66px;height:23px;border-right:1px solid #3a6f8e;border-radius:0 3px 0 0;background:linear-gradient(#3f6a82 0px,#3f6a82 1px,#5d88a0 1px,#5d88a0 3px,#a9c4d3 3px,#9dbccd 60%,#97b7c9)"></div>
<div class="a" style="left:408px;top:133px;width:1px;height:20px;background:#fff"></div>
<div class="a" style="left:408px;top:152px;width:65px;height:1px;background:#86a8bb"></div>
<div class="t " style="left:419.00px;top:132px;font-size:12px;font-weight:normal;font-style:normal;color:#000;transform:scaleX(1.1990);">Лог</div>
<div class="t " style="left:445.50px;top:132px;font-size:12px;font-weight:normal;font-style:normal;color:#000;transform:scaleX(1.0293);">ВВ</div>
<div class="t " style="left:236.00px;top:167px;font-size:12px;font-weight:normal;font-style:normal;color:#000;transform:scaleX(1.1956);">Логу</div>
<div class="t " style="left:269.61px;top:167px;font-size:12px;font-weight:normal;font-style:normal;color:#000;transform:scaleX(1.1771);">довжина,</div>
<div class="t " style="left:333.77px;top:167px;font-size:12px;font-weight:normal;font-style:normal;color:#000;transform:scaleX(1.1565);">обмеження</div>
<div class="t " style="left:409.88px;top:167px;font-size:12px;font-weight:normal;font-style:normal;color:#000;transform:scaleX(1.2056);">блоку,</div>
<div class="t " style="left:454.28px;top:167px;font-size:12px;font-weight:normal;font-style:normal;color:#000;transform:scaleX(1.2000);">тип,</div>
<div class="t " style="left:484.53px;top:167px;font-size:12px;font-weight:normal;font-style:normal;color:#000;transform:scaleX(1.1123);">час</div>
<div class="t " style="left:509.39px;top:167px;font-size:12px;font-weight:normal;font-style:normal;color:#000;transform:scaleX(1.1919);">агрегації:</div>
<div class="a" style="left:577px;top:165px;width:107px;height:23px;background:#c4c4c4;border:1px solid #3e7392;border-radius:3px;box-shadow:0 1px 0 #c6d8e2"></div>
<div class="t " style="left:581.00px;top:167px;font-size:12px;font-weight:normal;font-style:normal;color:#000;transform:scaleX(1.1452);">100</div>
<div class="a" style="left:690px;top:165px;width:107px;height:23px;background:#c4c4c4;border:1px solid #3e7392;border-radius:3px;box-shadow:0 1px 0 #c6d8e2"></div>
<div class="t " style="left:694.00px;top:167px;font-size:12px;font-weight:normal;font-style:normal;color:#000;transform:scaleX(1.1452);">1000</div>
<div class="a" style="left:913px;top:165px;width:107px;height:23px;background:#c4c4c4;border:1px solid #3e7392;border-radius:3px;box-shadow:0 1px 0 #c6d8e2"></div>
<div class="t " style="left:917.00px;top:167px;font-size:12px;font-weight:normal;font-style:normal;color:#000;transform:scaleX(1.1452);">5</div>
<div class="a" style="left:803px;top:165px;width:104px;height:23px;background:linear-gradient(#aac6d6,#96b8cb 70%,#8ab0c6);border:1px solid #3e7392;border-radius:3px;box-shadow:0 1px 0 #c6d8e2"></div>
<div class="a" style="left:807px;top:168px;width:79px;height:17px;border:1px dotted #333"></div>
<div class="a" style="left:886px;top:167px;width:1px;height:19px;background:#fff"></div>
<svg style="left:891px;top:170px" width="9" height="14" viewBox="0 0 9 14"><path d="M0.5 5.2 L4.5 0.6 L8.5 5.2 Z M0.5 7.6 L4.5 12.2 L8.5 7.6 Z" fill="#000"/></svg>
<div class="t " style="left:808.00px;top:167px;font-size:12px;font-weight:normal;font-style:normal;color:#000;transform:scaleX(1.1763);">Текст</div>
<div class="t " style="left:236.00px;top:190px;font-size:12px;font-weight:normal;font-style:normal;color:#000;transform:scaleX(1.2015);">Лог:</div>
<div class="a" style="left:236px;top:210px;width:784px;height:498px;border:1px solid #4e7a96;background:#c4c4c4"></div>
<div class="a" style="left:237px;top:211px;width:782px;height:1px;background:#9bb8c8"></div>
<div class="a" style="left:237px;top:211px;width:1px;height:496px;background:#9bb8c8"></div>
<div class="a" style="left:238px;top:212px;width:765px;height:479px;overflow:hidden">
<div class="m" style="left:4px;top:3px"><b>[2023-12-31T10:19:45.-352444]</b> <i>Підключено новий клієнт 49 з '127.0.0.1'</i></div>
<div class="m" style="left:4px;top:33px"><b>[2023-12-31T10:19:45.-347841]</b> <i>49:&lt; Отримано з '127.0.0.1'</i></div>
<div class="m" style="left:4px;top:48px">GET / HTTP/1.1</div>
<div class="m" style="left:4px;top:63px">Host: localhost:10002</div>
<div class="m" style="left:4px;top:78px">Connection: keep-alive</div>
<div class="m" style="left:4px;top:93px">Cache-Control: max-age=0</div>
<div class="m" style="left:4px;top:108px">sec-ch-ua: "Not_A Brand";v="8", "Chromium";v="120"</div>
<div class="m" style="left:4px;top:123px">sec-ch-ua-mobile: ?0</div>
<div class="m" style="left:4px;top:138px">sec-ch-ua-platform: "Linux"</div>
<div class="m" style="left:4px;top:153px">Upgrade-Insecure-Requests: 1</div>
<div class="m" style="left:4px;top:168px">User-Agent: Mozilla/5.0 (X11; Linux x86_64) AppleWebKit/537.36 (KHTML, like Gecko) Chrome/120.0.0.0</div>
<div class="m" style="left:4px;top:182px">Safari/537.36</div>
<div class="m" style="left:4px;top:197px">Accept: text/html,application/xhtml+xml,application/xml;q=0.9,image/avif,image/webp,image/apng,*/</div>
<div class="m" style="left:4px;top:211px">*;q=0.8,application/signed-exchange;v=b3;q=0.7</div>
<div class="m" style="left:4px;top:226px">Sec-Fetch-Site: none</div>
<div class="m" style="left:4px;top:241px">Sec-Fetch-Mode: navigate</div>
<div class="m" style="left:4px;top:256px">Sec-Fetch-User: ?1</div>
<div class="m" style="left:4px;top:271px">Sec-Fetch-Dest: document</div>
<div class="m" style="left:4px;top:286px">Accept-Encoding: gzip, deflate, br</div>
<div class="m" style="left:4px;top:301px">Accept-Language: uk,uk-UA;q=0.9,en-GB;q=0.8,en;q=0.7</div>
<div class="m" style="left:4px;top:361px"><b>[2023-12-31T10:19:45.-345885]</b> <i>Підключено новий клієнт 50 з '127.0.0.1'</i></div>
<div class="m" style="left:4px;top:391px"><b>[2023-12-31T10:19:45.-345433]</b> <i>49:&gt; Передано до '127.0.0.1'</i></div>
<div class="m" style="left:4px;top:406px">HTTP/1.0 200 OK</div>
<div class="m" style="left:4px;top:421px">Server: OpenSCADA 1+r0000</div>
<div class="m" style="left:4px;top:436px">Accept-Ranges: bytes</div>
<div class="m" style="left:4px;top:451px">Content-Length: 3134</div>
<div class="m" style="left:4px;top:466px">Cache-Control: no-cache, no-store, must-revalidate</div>
</div>
<div class="a" style="left:1018px;top:211px;width:1px;height:496px;background:#a0b9c7"></div>
<div class="a" style="left:237px;top:706px;width:782px;height:1px;background:#a0b9c7"></div>
<div class="a" style="left:1003px;top:212px;width:15px;height:479px;background:#5090b5;border:1px solid #3b6f8f;border-radius:3px"></div>
<div class="a" style="left:1003px;top:212px;width:15px;height:15px;background:linear-gradient(90deg,#b2cddc,#86aec4);border:1px solid #3b6f8f;border-radius:3px 3px 0 0"></div>
<svg style="left:1006px;top:216px" width="9" height="6" viewBox="0 0 9 6"><path d="M0.5 5.5 H8.5 L4.5 0.5 Z" fill="#000"/></svg>
<div class="a" style="left:1003px;top:226px;width:15px;height:48px;background:linear-gradient(90deg,#b2cddc,#86aec4);border:1px solid #3b6f8f"></div>
<div class="a" style="left:1007px;top:245px;width:7px;height:1px;background:#3b7090"></div>
<div class="a" style="left:1007px;top:246px;width:7px;height:1px;background:#fff"></div>
<div class="a" style="left:1007px;top:248px;width:7px;height:1px;background:#3b7090"></div>
<div class="a" style="left:1007px;top:249px;width:7px;height:1px;background:#fff"></div>
<div class="a" style="left:1007px;top:251px;width:7px;height:1px;background:#3b7090"></div>
<div class="a" style="left:1007px;top:252px;width:7px;height:1px;background:#fff"></div>
<div class="a" style="left:1003px;top:676px;width:15px;height:15px;background:linear-gradient(90deg,#b2cddc,#86aec4);border:1px solid #3b6f8f;border-radius:0 0 3px 3px"></div>
<svg style="left:1006px;top:681px" width="9" height="6" viewBox="0 0 9 6"><path d="M0.5 0.5 H8.5 L4.5 5.5 Z" fill="#000"/></svg>
<div class="a" style="left:238px;top:691px;width:765px;height:15px;background:#5090b5;border:1px solid #3b6f8f;border-radius:3px"></div>
<div class="a" style="left:238px;top:691px;width:15px;height:15px;background:linear-gradient(#b2cddc,#86aec4);border:1px solid #3b6f8f;border-radius:3px 0 0 3px"></div>
<svg style="left:243px;top:694px" width="6" height="9" viewBox="0 0 6 9"><path d="M5 0.5 V8.5 L0.5 4.5 Z" fill="#000"/></svg>
<div class="a" style="left:252px;top:691px;width:569px;height:15px;background:linear-gradient(#b2cddc,#86aec4);border:1px solid #3b6f8f"></div>
<div class="a" style="left:532px;top:695px;width:1px;height:7px;background:#3b7090"></div>
<div class="a" style="left:533px;top:695px;width:1px;height:7px;background:#fff"></div>
<div class="a" style="left:535px;top:695px;width:1px;height:7px;background:#3b7090"></div>
<div class="a" style="left:536px;top:695px;width:1px;height:7px;background:#fff"></div>
<div class="a" style="left:538px;top:695px;width:1px;height:7px;background:#3b7090"></div>
<div class="a" style="left:539px;top:695px;width:1px;height:7px;background:#fff"></div>
<div class="a" style="left:988px;top:691px;width:15px;height:15px;background:linear-gradient(#b2cddc,#86aec4);border:1px solid #3b6f8f;border-radius:0 3px 3px 0"></div>
<svg style="left:994px;top:694px" width="6" height="9" viewBox="0 0 6 9"><path d="M1 0.5 V8.5 L5.5 4.5 Z" fill="#000"/></svg>
<div class="a" style="left:1003px;top:691px;width:15px;height:15px;background:#a0b9c7"></div>
<svg style="left:950px;top:744px" width="17" height="12" viewBox="0 0 17 12"><path d="M1.5 1.5 L8 10.5 L15.5 1.5" stroke="#e8f0f4" stroke-width="1.4" fill="none" transform="translate(0.6,0.6)"/><path d="M0.5 0.5 H15.5 L8 10 Z" fill="#000"/></svg>
<div class="t " style="left:972.00px;top:740px;font-size:12px;font-weight:normal;font-style:normal;color:#333;transform:scaleX(1.2843);">*</div>
<div class="t " style="left:984.00px;top:739px;font-size:12px;font-weight:normal;font-style:normal;color:#0a880a;transform:scaleX(1.1369);">roman</div>
<svg style="left:1030px;top:743px" width="17" height="17" viewBox="0 0 17 17" shape-rendering="crispEdges"><rect x="0" y="16" width="1" height="1" fill="#ffffff"/><rect x="1" y="15" width="1" height="1" fill="#ffffff"/><rect x="1" y="16" width="1" height="1" fill="#5f8ca6"/><rect x="2" y="14" width="1" height="1" fill="#ffffff"/><rect x="2" y="15" width="1" height="1" fill="#5f8ca6"/><rect x="3" y="13" width="1" height="1" fill="#ffffff"/><rect x="3" y="14" width="1" height="1" fill="#5f8ca6"/><rect x="4" y="12" width="1" height="1" fill="#ffffff"/><rect x="4" y="13" width="1" height="1" fill="#5f8ca6"/><rect x="5" y="11" width="1" height="1" fill="#ffffff"/><rect x="5" y="12" width="1" height="1" fill="#5f8ca6"/><rect x="6" y="10" width="1" height="1" fill="#ffffff"/><rect x="6" y="11" width="1" height="1" fill="#5f8ca6"/><rect x="7" y="9" width="1" height="1" fill="#ffffff"/><rect x="7" y="10" width="1" height="1" fill="#5f8ca6"/><rect x="8" y="8" width="1" height="1" fill="#ffffff"/><rect x="8" y="9" width="1" height="1" fill="#5f8ca6"/><rect x="9" y="7" width="1" height="1" fill="#ffffff"/><rect x="9" y="8" width="1" height="1" fill="#5f8ca6"/><rect x="10" y="6" width="1" height="1" fill="#ffffff"/><rect x="10" y="7" width="1" height="1" fill="#5f8ca6"/><rect x="11" y="5" width="1" height="1" fill="#ffffff"/><rect x="11" y="6" width="1" height="1" fill="#5f8ca6"/><rect x="12" y="4" width="1" height="1" fill="#ffffff"/><rect x="12" y="5" width="1" height="1" fill="#5f8ca6"/><rect x="13" y="3" width="1" height="1" fill="#ffffff"/><rect x="13" y="4" width="1" height="1" fill="#5f8ca6"/><rect x="14" y="2" width="1" height="1" fill="#ffffff"/><rect x="14" y="3" width="1" height="1" fill="#5f8ca6"/><rect x="15" y="1" width="1" height="1" fill="#ffffff"/><rect x="15" y="2" width="1" height="1" fill="#5f8ca6"/><rect x="16" y="0" width="1" height="1" fill="#ffffff"/><rect x="16" y="1" width="1" height="1" fill="#5f8ca6"/><rect x="4" y="16" width="1" height="1" fill="#ffffff"/><rect x="5" y="15" width="1" height="1" fill="#ffffff"/><rect x="5" y="16" width="1" height="1" fill="#5f8ca6"/><rect x="6" y="14" width="1" height="1" fill="#ffffff"/><rect x="6" y="15" width="1" height="1" fill="#5f8ca6"/><rect x="7" y="13" width="1" height="1" fill="#ffffff"/><rect x="7" y="14" width="1" height="1" fill="#5f8ca6"/><rect x="8" y="12" width="1" height="1" fill="#ffffff"/><rect x="8" y="13" width="1" height="1" fill="#5f8ca6"/><rect x="9" y="11" width="1" height="1" fill="#ffffff"/><rect x="9" y="12" width="1" height="1" fill="#5f8ca6"/><rect x="10" y="10" width="1" height="1" fill="#ffffff"/><rect x="10" y="11" width="1" height="1" fill="#5f8ca6"/><rect x="11" y="9" width="1" height="1" fill="#ffffff"/><rect x="11" y="10" width="1" height="1" fill="#5f8ca6"/><rect x="12" y="8" width="1" height="1" fill="#ffffff"/><rect x="12" y="9" width="1" height="1" fill="#5f8ca6"/><rect x="13" y="7" width="1" height="1" fill="#ffffff"/><rect x="13" y="8" width="1" height="1" fill="#5f8ca6"/><rect x="14" y="6" width="1" height="1" fill="#ffffff"/><rect x="14" y="7" width="1" height="1" fill="#5f8ca6"/><rect x="15" y="5" width="1" height="1" fill="#ffffff"/><rect x="15" y="6" width="1" height="1" fill="#5f8ca6"/><rect x="16" y="4" width="1" height="1" fill="#ffffff"/><rect x="16" y="5" width="1" height="1" fill="#5f8ca6"/><rect x="8" y="16" width="1" height="1" fill="#ffffff"/><rect x="9" y="15" width="1" height="1" fill="#ffffff"/><rect x="9" y="16" width="1" height="1" fill="#5f8ca6"/><rect x="10" y="14" width="1" height="1" fill="#ffffff"/><rect x="10" y="15" width="1" height="1" fill="#5f8ca6"/><rect x="11" y="13" width="1" height="1" fill="#ffffff"/><rect x="11" y="14" width="1" height="1" fill="#5f8ca6"/><rect x="12" y="12" width="1" height="1" fill="#ffffff"/><rect x="12" y="13" width="1" height="1" fill="#5f8ca6"/><rect x="13" y="11" width="1" height="1" fill="#ffffff"/><rect x="13" y="12" width="1" height="1" fill="#5f8ca6"/><rect x="14" y="10" width="1" height="1" fill="#ffffff"/><rect x="14" y="11" width="1" height="1" fill="#5f8ca6"/><rect x="15" y="9" width="1" height="1" fill="#ffffff"/><rect x="15" y="10" width="1" height="1" fill="#5f8ca6"/><rect x="16" y="8" width="1" height="1" fill="#ffffff"/><rect x="16" y="9" width="1" height="1" fill="#5f8ca6"/><rect x="12" y="16" width="1" height="1" fill="#ffffff"/><rect x="13" y="15" width="1" height="1" fill="#ffffff"/><rect x="13" y="16" width="1" height="1" fill="#5f8ca6"/><rect x="14" y="14" width="1" height="1" fill="#ffffff"/><rect x="14" y="15" width="1" height="1" fill="#5f8ca6"/><rect x="15" y="13" width="1" height="1" fill="#ffffff"/><rect x="15" y="14" width="1" height="1" fill="#5f8ca6"/><rect x="16" y="12" width="1" height="1" fill="#ffffff"/><rect x="16" y="13" width="1" height="1" fill="#5f8ca6"/></svg>
</body></html>
